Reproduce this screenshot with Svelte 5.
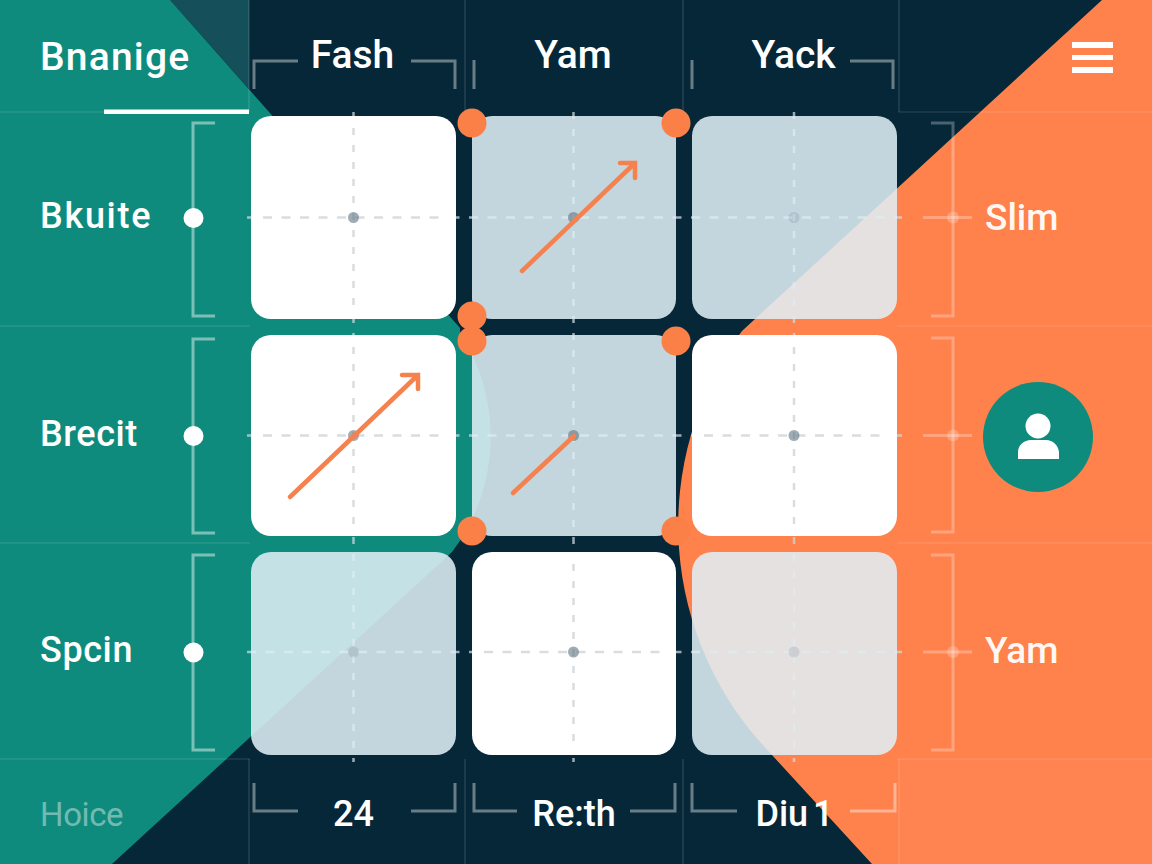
<script>
  const colHeads = ['Fash', 'Yam', 'Yack'];
  const colFoots = ['24', 'Re:th', 'Diu 1'];
  const rows = [
    { label: 'Bkuite', cells: ['solid', 'pale', 'pale'], end: 'Slim', tone: 'wide' },
    { label: 'Brecit', cells: ['solid', 'pale', 'solid'], avatar: true, tone: '' },
    { label: 'Spcin', cells: ['pale', 'solid', 'pale'], end: 'Yam', tone: 'up' }
  ];
  const xs = [353.5, 573.5, 794];
  const ys = [217.5, 435.5, 652];
  const colSpans = [[251, 456], [472, 676], [692, 897]];
  const rowSpans = [[116, 319], [335, 536], [552, 755]];
  const faint = new Set(['2,0', '0,2', '2,2']);
  const brackets = [
    'M254 89V61H298', 'M411 61H455V89', 'M474 60V89', 'M692 60V89', 'M850 61H893V89',
    'M254 783V811H298', 'M411 811H455V783', 'M474 783V811H517', 'M630 811H675V783', 'M692 783V811H737', 'M850 811H895V783'
  ];
  const leftBrackets = ['M215 123H193V316H215', 'M215 339H193V533H215', 'M215 555H193V750H215'];
  const rightBrackets = ['M931 123H953V316H931', 'M931 338H953V532H931', 'M931 555H953V750H931'];
  const joints = [[472, 123], [676, 123], [472, 316], [472, 341], [676, 341], [472, 531], [676, 531]];
  const rules = [
    'M0 112H104', 'M899 112H1152', 'M0 326H250', 'M897 326H1152', 'M0 543H250', 'M897 543H1152', 'M0 759H250', 'M897 759H1152',
    'M249 0V112', 'M465 0V112', 'M683 0V112', 'M899 0V112',
    'M249 759V864', 'M465 759V864', 'M683 759V864', 'M899 759V864'
  ];
</script>

<div class="board">
  <svg class="layer back" viewBox="0 0 1152 864" aria-hidden="true">
    <rect width="1152" height="864" fill="#062738" />
    <path fill="#15505a" d="M170 0H249V89Z" />
    <path fill="#0f8b7d" d="M0 0H170L460 328V333A191 191 0 0 1 452 552L112 864H0Z" />
    <path fill="#ff824d" d="M1102 0H1152V864H872L772 755A328 328 0 0 1 742 331Z" />
    <rect x="899" y="759" width="253" height="105" fill="rgba(255,255,255,0.025)" />
    {#each rules as d}
      <path {d} class="rule" />
    {/each}
    {#each brackets as d}
      <path {d} class="bracket" />
    {/each}
    {#each leftBrackets as d}
      <path {d} class="bracket left" />
    {/each}
    {#each rightBrackets as d}
      <path {d} class="bracket right" />
    {/each}
    {#each ys as y}
      <path d="M923 {y}H972" class="bracket right" />
      <circle cx="953" cy={y} r="6" class="tick" />
      <path d="M247 {y}H902" class="cross h" />
    {/each}
    {#each xs as x}
      <path d="M{x} 112V762" class="cross v" />
    {/each}
  </svg>

  <div class="grid">
    <div class="brand">Bnanige</div>
    {#each colHeads as head}
      <div class="head">{head}</div>
    {/each}
    <button class="menu" aria-label="Menu"><span></span><span></span><span></span></button>

    {#each rows as row}
      <div class="label {row.tone}">{row.label}</div>
      {#each row.cells as kind}
        <div class="cell {kind}"></div>
      {/each}
      <div class="end {row.tone}">
        {#if row.avatar}
          <div class="avatar">
            <svg viewBox="0 0 110 110" width="110" height="110" aria-hidden="true">
              <circle cx="55" cy="44" r="12.5" fill="#fff" />
              <path fill="#fff" d="M35 77V70C35 63 41 58 48 58H63C70 58 75 63 76 70V77Z" />
            </svg>
          </div>
        {:else}
          {row.end}
        {/if}
      </div>
    {/each}

    <div class="label foot-label">Hoice</div>
    {#each colFoots as foot}
      <div class="foot">{foot}</div>
    {/each}
    <div></div>
  </div>

  <svg class="layer front" viewBox="0 0 1152 864" aria-hidden="true">
    {#each ys as y}
      <circle cx="193.5" cy={y + 0.5} r="10" fill="#fff" />
    {/each}
    {#each ys as y, r}
      {#each xs as x, c}
        {#if rows[r].cells[c] === 'solid'}
          <path d="M{colSpans[c][0] + 12} {y}H{colSpans[c][1] - 8}" class="dash h" />
          <path d="M{x} {rowSpans[r][0] + 12}V{rowSpans[r][1] - 12}" class="dash v" />
        {/if}
        <circle cx={x} cy={y} r="5.5" class={faint.has(`${r},${c}`) ? 'hub faint' : 'hub'} />
      {/each}
    {/each}
    <path class="arrow" d="M522 271L635 163M620 163H635V178" />
    <path class="arrow" d="M290 497L418 375M402 375H418V389" />
    <path class="arrow" d="M513 493L574 436" />
    {#each joints as [cx, cy]}
      <circle {cx} {cy} r="14.5" fill="#fb8048" />
    {/each}
    <rect x="104" y="109.5" width="145" height="4.5" fill="#fff" />
  </svg>
</div>

<style>
  :global(body) {
    margin: 0;
    background: #062738;
  }
  .board {
    position: relative;
    width: 1152px;
    height: 864px;
    overflow: hidden;
    font-family: Roboto, "Liberation Sans", sans-serif;
    font-weight: 500;
    color: #fff;
  }
  .layer {
    position: absolute;
    inset: 0;
    width: 1152px;
    height: 864px;
    pointer-events: none;
  }
  .front {
    z-index: 2;
  }
  .grid {
    position: relative;
    z-index: 1;
    display: grid;
    grid-template-columns: 235px 205px 204px 205px 1fr;
    grid-template-rows: 100px 203px 201px 203px 1fr;
    gap: 16px;
    width: 1152px;
    height: 864px;
  }
  .brand,
  .label {
    display: flex;
    align-items: center;
    padding-left: 40px;
    white-space: nowrap;
  }
  .brand {
    font-size: 39px;
    padding-top: 14px;
    letter-spacing: 1.2px;
  }
  .label {
    font-size: 36px;
    letter-spacing: 0.6px;
    padding-bottom: 3px;
  }
  .label.wide {
    letter-spacing: 1.7px;
  }
  .label.up {
    padding-bottom: 7px;
  }
  .head {
    display: flex;
    align-items: center;
    justify-content: center;
    font-size: 39px;
    padding-top: 9px;
    padding-right: 2px;
  }
  .foot {
    display: flex;
    align-items: center;
    justify-content: center;
    font-size: 36px;
    padding-bottom: 7px;
    word-spacing: -4px;
  }
  .foot-label {
    font-size: 33px;
    letter-spacing: -0.4px;
    font-weight: 400;
    color: rgba(255, 255, 255, 0.42);
    padding-bottom: 7px;
  }
  .end {
    display: flex;
    align-items: center;
    padding-left: 72px;
    font-size: 37px;
    color: rgba(255, 255, 255, 0.96);
  }
  .end.up {
    padding-bottom: 6px;
  }
  .menu {
    align-self: start;
    justify-self: start;
    display: flex;
    flex-direction: column;
    gap: 7px;
    margin: 42px 0 0 159px;
    padding: 0;
    border: 0;
    background: none;
  }
  .menu span {
    display: block;
    width: 41px;
    height: 5.5px;
    background: #fff;
  }
  .cell {
    border-radius: 20px;
  }
  .solid {
    background: #fff;
  }
  .pale {
    background: rgba(224, 239, 246, 0.87);
  }
  .avatar {
    width: 110px;
    height: 110px;
    margin: 2px 0 0 -2px;
    border-radius: 50%;
    background: #0f8b7d;
  }
  .avatar svg {
    display: block;
  }
  .rule {
    fill: none;
    stroke: rgba(255, 255, 255, 0.16);
    stroke-width: 1.2;
  }
  .bracket {
    fill: none;
    stroke: rgba(255, 255, 255, 0.4);
    stroke-width: 3;
  }
  .bracket.left {
    stroke: rgba(255, 255, 255, 0.45);
  }
  .bracket.right {
    stroke: rgba(255, 255, 255, 0.28);
  }
  .tick {
    fill: rgba(255, 255, 255, 0.22);
  }
  .cross {
    fill: none;
    stroke: rgba(205, 215, 222, 0.75);
    stroke-width: 2.5;
  }
  .dash {
    fill: none;
    stroke: #d9dde0;
    stroke-width: 2.5;
  }
  .h {
    stroke-dasharray: 9 9.5;
  }
  .v {
    stroke-dasharray: 7 10;
  }
  .hub {
    fill: rgba(90, 112, 128, 0.58);
  }
  .hub.faint {
    fill: rgba(90, 112, 128, 0.16);
  }
  .arrow {
    fill: none;
    stroke: #f5824e;
    stroke-width: 4.5;
    stroke-linecap: round;
  }
</style>
